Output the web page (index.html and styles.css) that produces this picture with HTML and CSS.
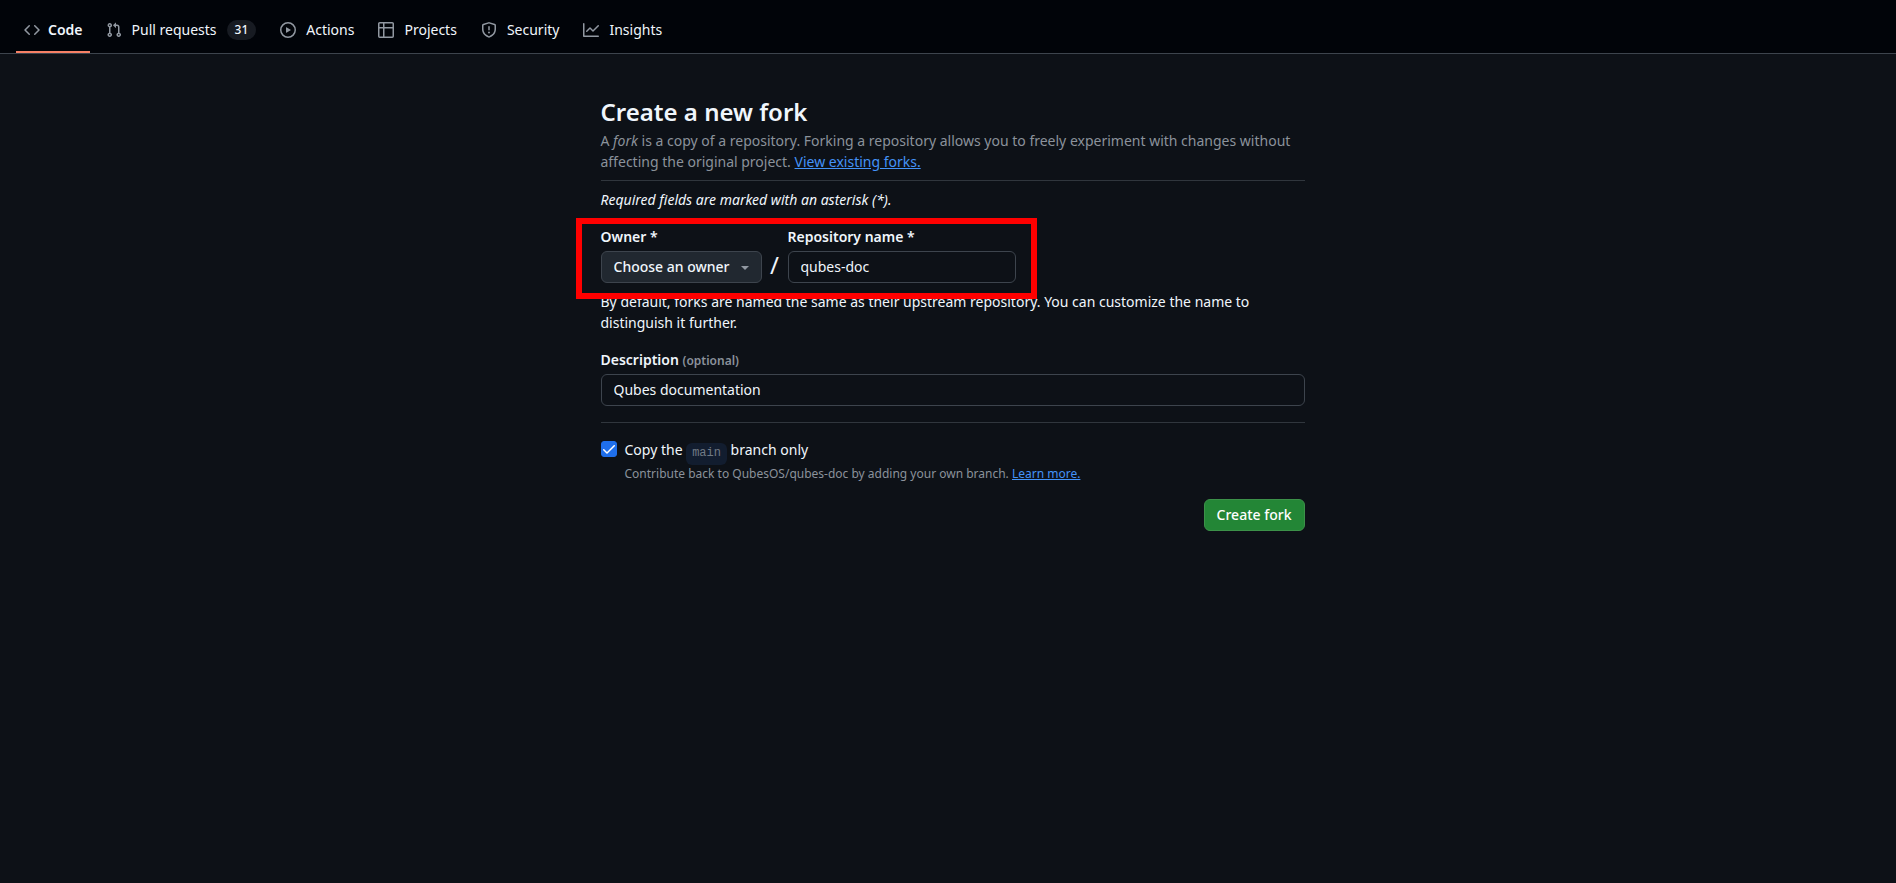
FILE: index.html
```html
<!DOCTYPE html>
<html lang="en">
<head>
<meta charset="utf-8">
<title>Create a new fork</title>
<link rel="stylesheet" href="styles.css">
</head>
<body>
<header class="repo-header">
  <nav class="repo-nav" aria-label="Repository">
    <a class="nav-item nav-item-current" href="#" aria-current="page">
      <svg class="icon" viewBox="0 0 16 16" aria-hidden="true"><path d="m11.28 3.22 4.25 4.25a.75.75 0 0 1 0 1.06l-4.25 4.25a.749.749 0 0 1-1.275-.326.749.749 0 0 1 .215-.734L13.94 8l-3.72-3.72a.749.749 0 0 1 .326-1.275.749.749 0 0 1 .734.215Zm-6.56 0a.751.751 0 0 1 1.042.018.751.751 0 0 1 .018 1.042L2.06 8l3.72 3.72a.749.749 0 0 1-.326 1.275.749.749 0 0 1-.734-.215L.47 8.53a.75.75 0 0 1 0-1.06Z"/></svg>
      <span>Code</span>
    </a>
    <a class="nav-item" href="#">
      <svg class="icon" viewBox="0 0 16 16" aria-hidden="true"><path d="M1.5 3.25a2.25 2.25 0 1 1 3 2.122v5.256a2.251 2.251 0 1 1-1.5 0V5.372A2.25 2.25 0 0 1 1.5 3.25Zm5.677-.177L9.573.677A.25.25 0 0 1 10 .854V2.5h1A2.5 2.5 0 0 1 13.5 5v5.628a2.251 2.251 0 1 1-1.5 0V5a1 1 0 0 0-1-1h-1v1.646a.25.25 0 0 1-.427.177L7.177 3.427a.25.25 0 0 1 0-.354ZM3.75 2.5a.75.75 0 1 0 0 1.5.75.75 0 0 0 0-1.5Zm0 9.5a.75.75 0 1 0 0 1.5.75.75 0 0 0 0-1.5Zm8.25.75a.75.75 0 1 0 1.5 0 .75.75 0 0 0-1.5 0Z"/></svg>
      <span>Pull requests</span>
      <span class="counter">31</span>
    </a>
    <a class="nav-item" href="#">
      <svg class="icon" viewBox="0 0 16 16" aria-hidden="true"><path d="M8 0a8 8 0 1 1 0 16A8 8 0 0 1 8 0ZM1.5 8a6.5 6.5 0 1 0 13 0 6.5 6.5 0 0 0-13 0Zm4.879-2.773 4.264 2.559a.25.25 0 0 1 0 .428l-4.264 2.559A.25.25 0 0 1 6 10.559V5.442a.25.25 0 0 1 .379-.215Z"/></svg>
      <span>Actions</span>
    </a>
    <a class="nav-item" href="#">
      <svg class="icon" viewBox="0 0 16 16" aria-hidden="true"><path d="M0 1.75C0 .784.784 0 1.75 0h12.5C15.216 0 16 .784 16 1.75v12.5A1.75 1.75 0 0 1 14.25 16H1.75A1.75 1.75 0 0 1 0 14.25ZM6.5 6.5v8h7.75a.25.25 0 0 0 .25-.25V6.5Zm8-1.5V1.75a.25.25 0 0 0-.25-.25H6.5V5Zm-13 1.5v7.75c0 .138.112.25.25.25H5v-8ZM5 5V1.5H1.75a.25.25 0 0 0-.25.25V5Z"/></svg>
      <span>Projects</span>
    </a>
    <a class="nav-item" href="#">
      <svg class="icon" viewBox="0 0 16 16" aria-hidden="true"><path d="M7.467.133a1.748 1.748 0 0 1 1.066 0l5.25 1.68A1.75 1.75 0 0 1 15 3.48V7c0 1.566-.32 3.182-1.303 4.682-.983 1.498-2.585 2.813-5.032 3.855a1.697 1.697 0 0 1-1.33 0c-2.447-1.042-4.049-2.357-5.032-3.855C1.32 10.182 1 8.566 1 7V3.48a1.75 1.75 0 0 1 1.217-1.667Zm.61 1.429a.25.25 0 0 0-.153 0l-5.25 1.68a.25.25 0 0 0-.174.238V7c0 1.358.275 2.666 1.057 3.86.784 1.194 2.121 2.34 4.366 3.297a.196.196 0 0 0 .154 0c2.245-.956 3.582-2.104 4.366-3.298C13.225 9.666 13.5 8.36 13.5 7V3.48a.251.251 0 0 0-.174-.237l-5.25-1.68ZM8.75 4.75v3a.75.75 0 0 1-1.5 0v-3a.75.75 0 0 1 1.5 0ZM9 10.5a1 1 0 1 1-2 0 1 1 0 0 1 2 0Z"/></svg>
      <span>Security</span>
    </a>
    <a class="nav-item" href="#">
      <svg class="icon" viewBox="0 0 16 16" aria-hidden="true"><path d="M1.5 1.75V13.5h13.75a.75.75 0 0 1 0 1.5H.75a.75.75 0 0 1-.75-.75V1.75a.75.75 0 0 1 1.5 0Zm14.28 2.53-5.25 5.25a.75.75 0 0 1-1.06 0L7 7.06 4.28 9.78a.751.751 0 0 1-1.042-.018.751.751 0 0 1-.018-1.042l3.25-3.25a.75.75 0 0 1 1.06 0L10 7.94l4.72-4.72a.751.751 0 0 1 1.042.018.751.751 0 0 1 .018 1.042Z"/></svg>
      <span>Insights</span>
    </a>
  </nav>
</header>
<main class="page">
  <form class="fork-form">
    <div class="intro">
      <h1 class="title">Create a new fork</h1>
      <p class="lead">A <em>fork</em> is a copy of a repository. Forking a repository allows you to freely experiment with changes without affecting the original project. <a class="link" href="#">View existing forks.</a></p>
    </div>
    <p class="required-note">Required fields are marked with an asterisk (*).</p>
    <div class="name-row">
      <div class="field">
        <label class="label" for="owner">Owner *</label>
        <div class="select-wrap">
          <select class="control owner-select" id="owner"><option>Choose an owner</option></select>
          <span class="caret"></span>
        </div>
      </div>
      <span class="slash">/</span>
      <div class="field">
        <label class="label" for="repo">Repository name *</label>
        <input class="control repo-input" id="repo" type="text" value="qubes-doc">
      </div>
      <div class="highlight"></div>
    </div>
    <p class="help">By default, forks are named the same as their upstream repository. You can customize the name to distinguish it further.</p>
    <div class="field description">
      <label class="label" for="description">Description <span class="optional">(optional)</span></label>
      <input class="control" id="description" type="text" value="Qubes documentation">
    </div>
    <div class="branch">
      <input class="checkbox" id="branch" type="checkbox" checked>
      <div>
        <label class="branch-label" for="branch">Copy the <code class="branch-name">main</code> branch only</label>
        <p class="branch-note">Contribute back to QubesOS/qubes-doc by adding your own branch. <a class="link" href="#">Learn more.</a></p>
      </div>
    </div>
    <div class="actions"><button class="submit" type="submit">Create fork</button></div>
  </form>
</main>
</body>
</html>
```
FILE: styles.css
```css
* {
  box-sizing: border-box;
}

body {
  margin: 0;
  background: #0d1117;
  color: #f0f6fc;
  font: 14px/21px "Noto Sans", sans-serif;
}

h1,
p {
  margin: 0;
}

.repo-header {
  background: #010409;
  border-bottom: 1px solid #3d444d;
}

.repo-nav {
  display: flex;
  gap: 8px;
  padding: 6px 16px 0;
}

.nav-item {
  display: flex;
  align-items: center;
  gap: 10px;
  height: 47px;
  padding: 2px 8px 0;
  border-bottom: 2px solid transparent;
  color: inherit;
  text-decoration: none;
  white-space: nowrap;
}

.nav-item-current {
  gap: 8px;
  padding-right: 7px;
  border-bottom-color: #f78166;
  font-weight: 600;
}

.icon {
  width: 16px;
  height: 16px;
  fill: #9198a1;
}

.counter {
  padding: 0 8px;
  border-radius: 20px;
  background: #171b22;
  font-size: 12px;
  font-weight: 500;
  line-height: 20px;
}

.page {
  padding: 40px 0 40px 9px;
}

.fork-form {
  max-width: 704px;
  margin: 0 auto;
}

.intro {
  padding-bottom: 8px;
  border-bottom: 1px solid #30363d;
}

.title {
  font-size: 24px;
  font-weight: 600;
  line-height: 36px;
}

.lead {
  color: #8b929b;
}

.link {
  color: #4493f8;
  text-decoration: underline;
}

.required-note {
  margin-top: 8px;
  font-style: italic;
}

.name-row {
  position: relative;
  display: flex;
  align-items: flex-end;
  margin-top: 16px;
}

.field {
  display: flex;
  flex-direction: column;
  gap: 4px;
}

.label {
  font-weight: 600;
}

.control {
  width: 100%;
  height: 32px;
  padding: 0 12px 1px;
  border: 1px solid #3d444d;
  border-radius: 6px;
  background: #0d1117;
  color: inherit;
  font: inherit;
}

.select-wrap {
  position: relative;
}

.owner-select {
  width: 161px;
  appearance: none;
  background: #212830;
  font-weight: 500;
}

.caret {
  position: absolute;
  top: 15px;
  right: 13px;
  border: 4px solid transparent;
  border-top-color: #9198a1;
  border-bottom: 0;
  pointer-events: none;
}

.slash {
  width: 26px;
  font-size: 24px;
  line-height: 36px;
  text-align: center;
}

.repo-input {
  width: 228px;
}

.highlight {
  position: absolute;
  top: -8px;
  bottom: -16px;
  left: -25px;
  width: 461px;
  border: 6px solid #ff0000;
  pointer-events: none;
}

.help {
  margin-top: 8px;
}

.description {
  margin-top: 16px;
}

.optional {
  color: #8b929b;
  font-size: 12px;
  line-height: 1;
}

.branch {
  display: flex;
  gap: 8px;
  margin-top: 16px;
  padding-top: 16px;
  border-top: 1px solid #30363d;
}

.checkbox {
  flex: none;
  width: 16px;
  height: 16px;
  margin: 2px 0 0;
  appearance: none;
  border: 1px solid #3d444d;
  border-radius: 3px;
}

.checkbox:checked {
  border-color: #1f6feb;
  background: #1f6feb url("data:image/svg+xml,%3Csvg xmlns='http://www.w3.org/2000/svg' viewBox='0 0 12 9'%3E%3Cpath fill='white' d='M11.78.22a.75.75 0 0 1 0 1.061L4.52 8.541a.75.75 0 0 1-1.062 0L.202 5.285a.75.75 0 0 1 1.061-1.061l2.725 2.723L10.718.22a.75.75 0 0 1 1.062 0Z'/%3E%3C/svg%3E") center / 12px 9px no-repeat;
}

.branch-name {
  padding: 3px 6px 5px;
  border-radius: 6px;
  background: #121d2f;
  color: #717a85;
  font: 12px/12px "Liberation Mono", monospace;
  vertical-align: -1px;
}

.branch-note {
  margin-top: 4px;
  color: #8b929b;
  font-size: 12px;
  line-height: 20px;
}

.actions {
  display: flex;
  justify-content: flex-end;
  margin-top: 15px;
}

.submit {
  height: 32px;
  padding: 0 12px 1px;
  border: 1px solid #3c9149;
  border-radius: 6px;
  background: #238636;
  color: #ffffff;
  font: inherit;
  font-weight: 500;
}
```
